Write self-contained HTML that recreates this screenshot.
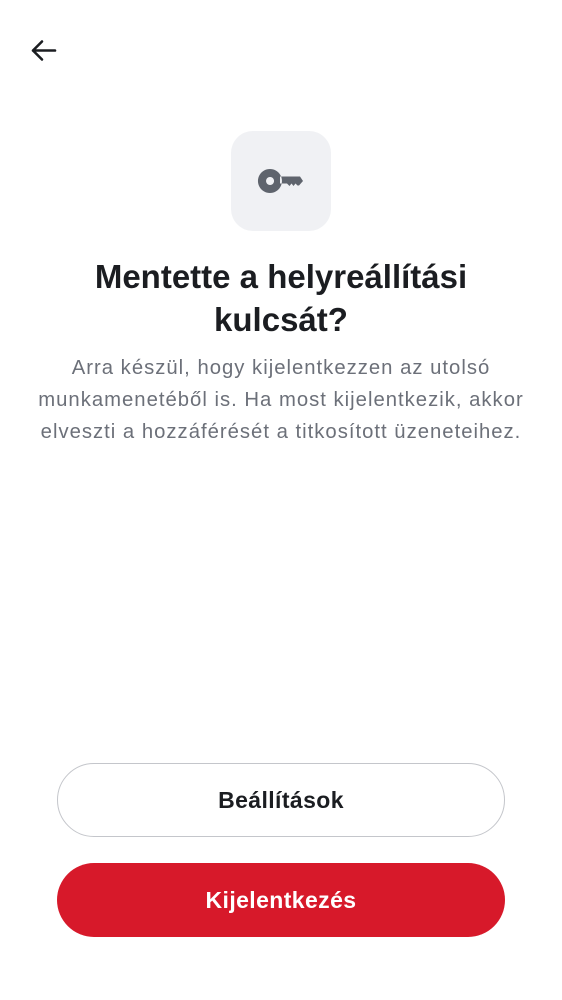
<!DOCTYPE html>
<html><head><meta charset="utf-8"><style>
body{margin:0;width:562px;height:1000px;background:#fff;font-family:"Liberation Sans",sans-serif;position:relative;overflow:hidden}
.box{position:absolute;left:231px;top:131px;width:100px;height:100px;border-radius:22px;background:#f0f1f4}
h1{position:absolute;top:255px;left:0;width:562px;margin:0;text-align:center;font-size:33px;line-height:43px;font-weight:bold;color:#1b1d21}
p{position:absolute;top:352px;left:0;width:562px;margin:0;text-align:center;font-size:20.3px;line-height:32px;color:#6c7079;letter-spacing:1px;white-space:nowrap}
.btn{position:absolute;left:57px;width:448px;height:74px;border-radius:37px;box-sizing:border-box;display:flex;align-items:center;justify-content:center;font-size:23px;font-weight:bold;letter-spacing:0.4px}
.b1{top:763px;border:1.5px solid #c4c6cb;color:#1b1d21}
.b2{top:863px;background:#d7192a;color:#fff}
</style></head><body>
<svg style="position:absolute;left:28px;top:36px" width="30" height="30" viewBox="0 0 30 30"><path d="M27 14.5H5M14 5.5L5 14.5L14 23.5" fill="none" stroke="#1b1d21" stroke-width="2.6" stroke-linecap="round" stroke-linejoin="round"/></svg>
<div class="box"><svg width="100" height="100" viewBox="0 0 100 100"><path fill="#5f646d" fill-rule="evenodd" d="M39 38a12 12 0 1 1-0.1 0zM39 46a4 4 0 1 0 0.1 0zM49 45.5h20l3 4.5l-4 4.5h-1.5l-2-2l-2 2.5l-2-2.5l-2 2.5l-2.5-2.5h-7z"/></svg></div>
<h1>Mentette a helyreállítási<br>kulcsát?</h1>
<p>Arra készül, hogy kijelentkezzen az utolsó<br>munkamenetéből is. Ha most kijelentkezik, akkor<br>elveszti a hozzáférését a titkosított üzeneteihez.</p>
<div class="btn b1">Beállítások</div>
<div class="btn b2">Kijelentkezés</div>
</body></html>
